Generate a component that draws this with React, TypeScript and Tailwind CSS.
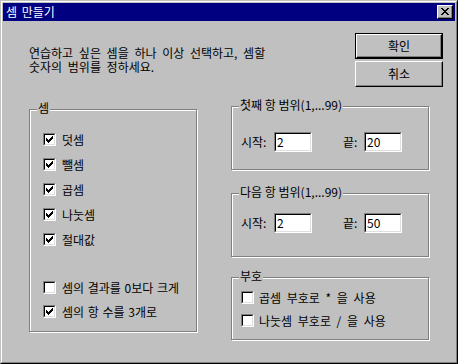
import React from "react";

const FONT = '"Noto Sans CJK KR", "Liberation Sans", sans-serif';

function CheckMark() {
  const rows: [number, number, number][] = [
    [6, 0, 1],
    [5, 1, 2],
    [0, 2, 1],
    [4, 2, 3],
    [0, 3, 2],
    [3, 3, 3],
    [0, 4, 5],
    [1, 5, 3],
    [2, 6, 1],
  ];
  return (
    <svg width="9" height="9" viewBox="0 0 9 9" shapeRendering="crispEdges" className="block">
      {rows.map(([x, y, w], i) => (
        <rect key={i} x={x + 1} y={y + 1} width={w} height={1} fill="#000" />
      ))}
    </svg>
  );
}

function Check({ checked }: { checked: boolean }) {
  return (
    <div className="w-[13px] h-[13px] shrink-0 border border-t-[#808080] border-l-[#808080] border-b-white border-r-white">
      <div className="w-full h-full border border-t-black border-l-black border-b-[#dfdfdf] border-r-[#dfdfdf] bg-white">
        {checked && <CheckMark />}
      </div>
    </div>
  );
}

function CheckRow({ checked, label, wide }: { checked: boolean; label: string; wide?: boolean }) {
  return (
    <div className={wide ? "flex items-center h-[13px] gap-[5px]" : "flex items-center h-[13px] gap-[6px]"}>
      <Check checked={checked} />
      <span
        className={
          wide
            ? "text-[12px] leading-[13px] whitespace-nowrap [word-spacing:3px]"
            : "text-[12px] leading-[13px] whitespace-nowrap [word-spacing:1px]"
        }
      >
        {label}
      </span>
    </div>
  );
}

function Edit({ value }: { value: string }) {
  return (
    <div className="w-[38px] h-[20px] shrink-0 border border-t-[#808080] border-l-[#808080] border-b-white border-r-white">
      <div className="w-full h-full border border-t-black border-l-black border-b-[#dfdfdf] border-r-[#dfdfdf] bg-white pl-[1px] text-[12px] leading-[16px]">
        {value}
      </div>
    </div>
  );
}

function Button({ label, isDefault }: { label: string; isDefault?: boolean }) {
  const inner = (
    <div className="w-full h-full border border-t-white border-l-white border-b-black border-r-black shadow-[inset_-1px_-1px_0_#808080] flex items-center justify-center text-[12px] leading-[12px]">
      {label}
    </div>
  );
  if (isDefault) {
    return <div className="w-[88px] h-[26px] border border-black">{inner}</div>;
  }
  return <div className="w-[88px] h-[26px]">{inner}</div>;
}

function Group({
  label,
  className,
  children,
}: {
  label: string;
  className: string;
  children: React.ReactNode;
}) {
  return (
    <div className={className}>
      <span className="absolute left-[7px] top-[-8px] px-[1px] bg-[#c0c0c0] text-[12px] leading-[12px] whitespace-nowrap">
        {label}
      </span>
      {children}
    </div>
  );
}

function RangeRow({ a, b }: { a: string; b: string }) {
  return (
    <div className="flex items-center pl-[9px]">
      <span className="w-[33px] text-[12px] leading-[20px] whitespace-nowrap">시작:</span>
      <Edit value={a} />
      <span className="ml-[31px] w-[21px] text-[12px] leading-[20px] whitespace-nowrap">끝:</span>
      <Edit value={b} />
    </div>
  );
}

function CloseGlyph() {
  const rows: [number, number, number][] = [
    [0, 0, 2],
    [6, 0, 2],
    [1, 1, 2],
    [5, 1, 2],
    [2, 2, 4],
    [3, 3, 2],
    [2, 4, 4],
    [1, 5, 2],
    [5, 5, 2],
    [0, 6, 2],
    [6, 6, 2],
  ];
  return (
    <svg width="8" height="7" viewBox="0 0 8 7" shapeRendering="crispEdges" className="block">
      {rows.map(([x, y, w], i) => (
        <rect key={i} x={x} y={y} width={w} height={1} fill="#000" />
      ))}
    </svg>
  );
}

export default function App() {
  return (
    <div
      className="w-[458px] h-[364px] bg-[#c0c0c0] text-black border border-t-[#c0c0c0] border-l-[#c0c0c0] border-b-black border-r-black"
      style={{ fontFamily: FONT }}
    >
      <div className="h-full border border-t-white border-l-white border-b-[#808080] border-r-[#808080] p-[1px] flex flex-col">
        {/* Title bar */}
        <div className="h-[18px] bg-[#000080] flex items-center justify-between pl-[3px] pr-[2px] shrink-0">
          <span className="text-white text-[12px] leading-[14px] whitespace-nowrap [word-spacing:2px]">셈 만들기</span>
          <div className="w-[16px] h-[14px] border border-t-white border-l-white border-b-black border-r-black shadow-[inset_-1px_-1px_0_#808080] bg-[#c0c0c0] flex items-center justify-center">
            <div className="-mt-[1px] -ml-[1px]">
              <CloseGlyph />
            </div>
          </div>
        </div>

        {/* Content */}
        <div className="flex-1 pl-[26px] pt-[12px]">
          <div className="flex">
            <div className="flex-1 mt-[13px] text-[12px] leading-[14px] whitespace-nowrap [word-spacing:3px]">
              연습하고 싶은 셈을 하나 이상 선택하고, 셈할
              <br />
              숫자의 범위를 정하세요.
            </div>
            <div className="w-[88px] mr-[12px] flex flex-col gap-[2px]">
              <Button label="확인" isDefault />
              <Button label="취소" />
            </div>
          </div>

          <div className="flex items-start mt-[19px]">
            <Group
              label="셈"
              className="relative mt-[3px] w-[168px] h-[223px] border border-[#808080] shadow-[1px_1px_0_#fff,inset_1px_1px_0_#fff] pt-[23px] pl-[13px]"
            >
              <div className="flex flex-col gap-[12px]">
                <CheckRow checked label="덧셈" />
                <CheckRow checked label="뺄셈" />
                <CheckRow checked label="곱셈" />
                <CheckRow checked label="나눗셈" />
                <CheckRow checked label="절대값" />
              </div>
              <div className="mt-[35px] flex flex-col gap-[11px]">
                <CheckRow checked={false} label="셈의 결과를 0보다 크게" />
                <CheckRow checked label="셈의 항 수를 3개로" />
              </div>
            </Group>

            <div className="ml-[34px] w-[198px] flex flex-col">
              <Group
                label="첫째 항 범위(1,...99)"
                className="relative h-[64px] border border-[#808080] shadow-[1px_1px_0_#fff,inset_1px_1px_0_#fff] pt-[25px]"
              >
                <RangeRow a="2" b="20" />
              </Group>
              <Group
                label="다음 항 범위(1,...99)"
                className="relative mt-[23px] h-[64px] border border-[#808080] shadow-[1px_1px_0_#fff,inset_1px_1px_0_#fff] pt-[19px]"
              >
                <RangeRow a="2" b="50" />
              </Group>
              <Group
                label="부호"
                className="relative mt-[20px] h-[63px] border border-[#808080] shadow-[1px_1px_0_#fff,inset_1px_1px_0_#fff] pt-[13px] pl-[9px]"
              >
                <div className="flex flex-col gap-[10px]">
                  <CheckRow checked={false} label="곱셈 부호로 * 을 사용" wide />
                  <CheckRow checked={false} label="나눗셈 부호로 / 을 사용" wide />
                </div>
              </Group>
            </div>
          </div>
        </div>
      </div>
    </div>
  );
}
